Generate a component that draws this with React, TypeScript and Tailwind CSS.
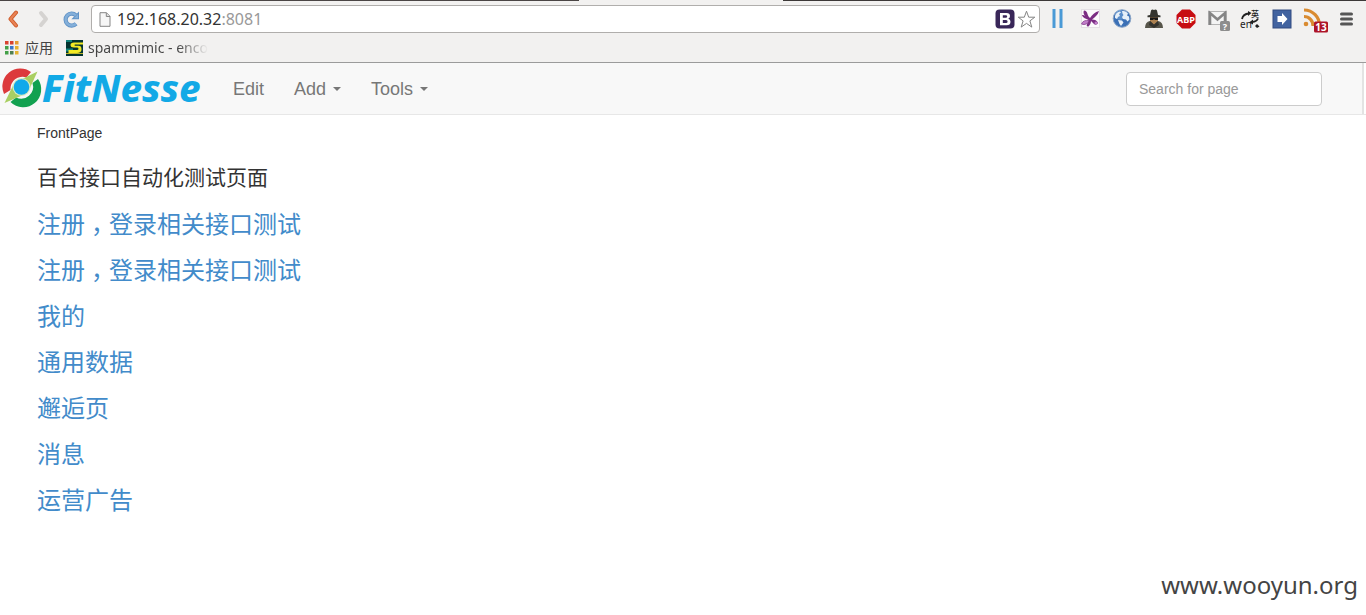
import type { ReactNode } from "react";

const links = [
  "注册，登录相关接口测试",
  "注册，登录相关接口测试",
  "我的",
  "通用数据",
  "邂逅页",
  "消息",
  "运营广告",
];

function BackIcon() {
  return (
    <svg width="12" height="18" viewBox="0 0 12 18" fill="none">
      <path d="M9 2.500 3.500 9 9 15.500" stroke="#cf5c2c" strokeWidth="4" strokeLinejoin="round" strokeLinecap="round" />
      <path d="M9 2.500 3.500 9 9 15.500" stroke="#e88355" strokeWidth="2" strokeLinejoin="round" strokeLinecap="round" />
    </svg>
  );
}

function ForwardIcon() {
  return (
    <svg width="12" height="18" viewBox="0 0 12 18" fill="none">
      <path d="m3 3 5 6-5 6" stroke="#d5d3d1" strokeWidth="4" strokeLinejoin="round" strokeLinecap="round" />
    </svg>
  );
}

function ReloadIcon() {
  return (
    <svg width="17" height="17" viewBox="0 0 17 17" fill="none">
      <path d="M13 12.700A6 6 0 1 1 12.800 4.300" stroke="#5f92c6" strokeWidth="4.200" />
      <path d="M16 .6v7.600H8.400z" fill="#5f92c6" />
      <path d="M13 12.700A6 6 0 1 1 12.800 4.300" stroke="#84afd9" strokeWidth="2.500" />
      <path d="M15 3v4.200h-4.200z" fill="#84afd9" />
    </svg>
  );
}

function PageIcon() {
  return (
    <svg width="12" height="15" viewBox="0 0 12 15">
      <path d="M1 .7h6.500L11 4.300v10H1z" fill="#f6f6f6" stroke="#858585" />
      <path d="M7.300.8v3.700H11" fill="#ddd" stroke="#858585" />
    </svg>
  );
}

function AppsIcon() {
  const colors = ["#d8422f", "#d8422f", "#e59a2e", "#43a047", "#3b77c9", "#e5b22e", "#43a047", "#4f7f4f", "#e5b22e"];
  return (
    <svg width="14" height="14" viewBox="0 0 14 14">
      {colors.map((c, i) => (
        <rect key={i} x={(i % 3) * 5} y={Math.floor(i / 3) * 5} width="3.500" height="3.500" fill={c} />
      ))}
    </svg>
  );
}

function SpamIcon() {
  return (
    <svg width="17" height="16" viewBox="0 0 17 16">
      <rect width="17" height="16" fill="#04332f" />
      <path d="M0 8.500h7v3H0zM0 0h6v2H0z" fill="#13827a" />
      <path d="M17 2.500H8Q4.500 2.500 4.500 5T8 7.500h3q1.500 0 1.500 1.200T11 10H2.500v3H11q4.500 0 4.500-3.800T12 5.800H9Q8.500 5.500 8.500 5T9 4.500h8z" fill="#f2ea23" />
      <path d="M0 13.500h17" stroke="#b9b42a" />
    </svg>
  );
}

function BootstrapIcon() {
  return (
    <svg width="20" height="20" viewBox="0 0 20 20">
      <rect x=".5" y=".5" width="19" height="19" rx="4" fill="#392759" />
      <path fillRule="evenodd" d="M5 4h6.500q3.500 0 3.500 3 0 2-1.700 2.700 2.200.6 2.200 3 0 3.500-4 3.500H5zm2.800 2.200v2.600h3q1.400 0 1.400-1.300t-1.400-1.300zm0 4.700v3h3.300q1.500 0 1.500-1.500t-1.500-1.500z" fill="#fff" />
    </svg>
  );
}

function StarIcon() {
  return (
    <svg width="19" height="19" viewBox="0 0 19 19">
      <path d="m9.500 1.200 2.200 6h6.100l-4.900 3.700 1.900 6.200-5.300-3.700-5.300 3.700 1.900-6.200L1.200 7.200h6.100z" fill="#fff" stroke="#858585" strokeLinejoin="round" />
    </svg>
  );
}

function BarsIcon() {
  return (
    <svg width="20" height="20" viewBox="0 0 20 20">
      <path d="M4.500 0h3v19h-3zM11.500 0h3v19h-3z" fill="#4a9ad6" />
    </svg>
  );
}

function BirdIcon() {
  return (
    <svg width="20" height="20" viewBox="0 0 20 20">
      <rect x="1.500" y=".5" width="18" height="18" fill="#fbfafb" stroke="#e4e0e4" />
      <path d="M4 1.500c2 0 3 1.500 3.500 3.500S9 8 10 9c2-3 5-6 9-7-1 4-4 6-7 8.500 3 0 5 1 6 3.500-1 2-3 2-4 1s-2-2-3-3c0 2-1 4-2.500 5.500-2 .5-2-1-1.500-2.500L8.500 11C6 9.500 3 9 2 6.500c1-1 2 0 3 .5C3.500 5 3 3 4 1.500z" fill="#7b2d83" />
      <path d="M1.500 15c1-3 4-4 7.500-3.500-1 3-4 5-7.500 3.500z" fill="#c07cc8" stroke="#8a4192" strokeWidth=".8" />
      <circle cx="16" cy="14" r="1.500" fill="#c07cc8" />
    </svg>
  );
}

function GlobeIcon() {
  return (
    <svg width="20" height="20" viewBox="0 0 20 20">
      <circle cx="10" cy="9.500" r="8.800" fill="#3b70b6" stroke="#8ba5c6" />
      <circle cx="8" cy="6" r="5" fill="#79a9dd" opacity=".5" />
      <path d="M3 7c1-3 3-4 5-4.500l1 1L7 5l1 2-2 1-1 2-2-1zM10 2c3-.5 5 1 6 2.500l-1 2 2 1 .5 3-2 2-1.500-2-3-.5-1-2 1.500-2-1-1.500zM6 11l4 .500 1.500 2L9 17l-1.500-2z" fill="#e6eff8" />
    </svg>
  );
}

function SpyIcon() {
  return (
    <svg width="20" height="20" viewBox="0 0 20 20">
      <path d="M1 19q0-6 5-7h8q5 1 5 7z" fill="#57554a" />
      <path d="M6 8h8v4l-4 4-4-4z" fill="#ac8150" />
      <path d="M6 6 7 1.500Q8 0 10 1q2-1 3 .5L14 6l2.500.5v1.800h-13V6.500z" fill="#35352f" />
      <path d="M6 8.500h8V11h-3l-1-1-1 1H6z" fill="#181818" />
      <path d="m6 12 4 3.500 4-3.500 1 4-5 3-5-3z" fill="#34332d" />
    </svg>
  );
}

function AdblockIcon() {
  return (
    <svg width="20" height="20" viewBox="0 0 20 20">
      <path d="M6 .5h8l5.500 5.500v8L14 19.500H6L.5 14V6z" fill="#c70d12" />
      <text x="10" y="13.500" textAnchor="middle" fontFamily="Open Sans, sans-serif" fontWeight="700" fontSize="9" fill="#fff">ABP</text>
    </svg>
  );
}

function MailIcon() {
  return (
    <svg width="24" height="24" viewBox="0 0 24 24">
      <rect x="2.500" y="4.500" width="18" height="13" fill="#f4f4f4" stroke="#b5b5b5" />
      <path d="M4 18V6l7.500 6.500L19 6v12" fill="none" stroke="#858585" strokeWidth="2.600" />
      <rect x="14" y="14" width="10" height="10" rx="1.500" fill="#8d8d8d" />
      <text x="19" y="22.500" textAnchor="middle" fontFamily="Noto Sans, sans-serif" fontWeight="700" fontSize="9" fill="#fff">?</text>
    </svg>
  );
}

function TranslateIcon() {
  return (
    <svg width="22" height="22" viewBox="0 0 22 22" overflow="visible">
      <text x="12" y="9" fontFamily="Noto Sans CJK SC, sans-serif" fontWeight="500" fontSize="8" fill="#222">英</text>
      <text x="1" y="20" fontFamily="Noto Sans, sans-serif" fontSize="10" fill="#222">en</text>
      <path d="M3 11Q4 6 10 5.500M19 10.500q-1 3-6 3.500" fill="none" stroke="#222" strokeWidth="1.800" />
      <path d="m9 3 3.500 2L9 8zM14 11.500v5l-4-2z" fill="#222" />
      <path d="m16 18 2-2 2.500 2.500L18 20z" fill="#222" />
    </svg>
  );
}

function ArrowIcon() {
  return (
    <svg width="20" height="20" viewBox="0 0 20 20">
      <rect x="1" y="1" width="18" height="18" fill="#4263a0" stroke="#304b80" />
      <path d="M5.500 7h4.500V4l5.500 6-5.500 6v-3H5.500z" fill="#fff" />
    </svg>
  );
}

function FeedIcon() {
  return (
    <svg width="26" height="26" viewBox="0 0 26 26" overflow="visible">
      <circle cx="5" cy="18" r="2.300" fill="#d98b31" />
      <path d="M3 10.500A9 9 0 0 1 12 20M3 4A15.500 15.500 0 0 1 18.500 20" fill="none" stroke="#d98b31" strokeWidth="3.200" />
      <rect x="13" y="15.500" width="14" height="11" rx="1.500" fill="#ad1428" />
      <text x="20" y="24.500" textAnchor="middle" fontFamily="Noto Sans, sans-serif" fontWeight="700" fontSize="10" fill="#fff">13</text>
    </svg>
  );
}

function MenuIcon() {
  return (
    <svg width="16" height="16" viewBox="0 0 16 16">
      <path d="M3.500 3h10M3.500 8h10M3.500 13h10" stroke="#555" strokeWidth="3" strokeLinecap="round" />
    </svg>
  );
}

const extensions: { name: string; icon: ReactNode }[] = [
  { name: "Pause", icon: <BarsIcon /> },
  { name: "Bird", icon: <BirdIcon /> },
  { name: "Globe", icon: <GlobeIcon /> },
  { name: "Spy", icon: <SpyIcon /> },
  { name: "Adblock", icon: <AdblockIcon /> },
  { name: "Mail", icon: <MailIcon /> },
  { name: "Translate", icon: <TranslateIcon /> },
  { name: "Send", icon: <ArrowIcon /> },
  { name: "Feeds", icon: <FeedIcon /> },
  { name: "Menu", icon: <MenuIcon /> },
];

function Logo() {
  return (
    <svg width="204" height="50" viewBox="0 0 204 50" overflow="visible" role="img" aria-label="FitNesse">
      <path d="M4 30A18 18 0 0 1 31 8L26.500 13.500A12 12 0 0 0 10.500 26z" fill="#dc3a3c" />
      <path d="M38 15A18 18 0 0 1 10.500 38l5.500-4.500A12 12 0 0 0 32.500 19z" fill="#12a150" />
      <path d="M37.500 7.500 29 26 22 31.500 4.500 39 13 21.500 20 16z" fill="#a9cf62" />
      <circle cx="21.500" cy="23" r="9" fill="#d9ecc4" />
      <circle cx="21.500" cy="23" r="7.800" fill="#12a9ea" />
      <text x="42" y="38" fontFamily="Noto Sans, sans-serif" fontWeight="800" fontStyle="italic" fontSize="38" fill="#12a9e6">FitNesse</text>
    </svg>
  );
}

function Caret() {
  return (
    <svg width="8" height="4" viewBox="0 0 8 4">
      <path d="M0 0h8L4 4z" fill="#777" />
    </svg>
  );
}

function Title({ text }: { text: string }) {
  const [head, tail] = text.split("，");
  return (
    <>
      {head}
      {tail && <span className="inline-block px-[6px] [font-feature-settings:'halt']">，</span>}
      {tail}
    </>
  );
}

export default function App() {
  return (
    <div className="flex min-h-screen flex-col bg-white font-['Liberation_Sans','Noto_Sans_CJK_SC',sans-serif] text-[#333]">
      <header className="border-b border-[#9b9b9b] bg-[#f2f1f0] font-['Noto_Sans','Noto_Sans_CJK_SC',sans-serif] text-[#444]">
        <div className="flex h-px">
          <div className="w-[579px] bg-[#4a4545]" />
          <div className="w-[204px]" />
          <div className="flex-1 bg-[#3c3838]" />
        </div>
        <div className="flex h-9 items-center">
          <div className="flex w-[91px] items-center pl-[7px]">
            <button aria-label="Back"><BackIcon /></button>
            <button aria-label="Forward" className="ml-[19px]"><ForwardIcon /></button>
            <button aria-label="Reload" className="ml-[13px]"><ReloadIcon /></button>
          </div>
          <div className="flex h-7 flex-1 items-center rounded-sm border border-[#b0aeac] bg-white pr-[3px] pl-[7px]">
            <PageIcon />
            <a href="#" className="ml-[6px] flex-1 text-base leading-6 text-[#333]">
              192.168.20.32<span className="text-[#999]">:8081</span>
            </a>
            <button aria-label="Bootstrap"><BootstrapIcon /></button>
            <button aria-label="Bookmark" className="ml-[2px]"><StarIcon /></button>
          </div>
          <div className="ml-[2px] flex pr-1">
            {extensions.map((e) => (
              <button key={e.name} aria-label={e.name} className="flex h-7 w-8 items-center justify-center">
                {e.icon}
              </button>
            ))}
          </div>
        </div>
        <nav className="flex h-[25px] items-start pl-[5px] text-sm leading-[22px]">
          <a href="#" className="flex items-center gap-[6px]"><AppsIcon />应用</a>
          <a href="#" className="ml-[13px] flex items-center gap-[5px]">
            <SpamIcon />
            <span className="bg-linear-to-r from-[#444] from-75% to-transparent bg-clip-text whitespace-nowrap text-transparent">spammimic - enco</span>
          </a>
        </nav>
      </header>

      <nav className="flex h-[52px] items-center border-b border-[#e7e7e7] bg-[#f8f8f8] text-lg text-[#777]">
        <a href="#"><Logo /></a>
        <a href="#" className="ml-[29px]">Edit</a>
        <button className="ml-[30px] flex items-center gap-[7px]">Add <Caret /></button>
        <button className="ml-[30px] flex items-center gap-[7px]">Tools <Caret /></button>
        <input
          type="search"
          aria-label="Search for page"
          placeholder="Search for page"
          className="mr-10 ml-auto h-[34px] w-[196px] rounded border border-[#ccc] bg-white px-3 text-sm placeholder:text-[#999]"
        />
        <div className="h-full w-1 border-l-2 border-[#e3e3e3] bg-white" />
      </nav>

      <main className="px-[37px] pt-2">
        <p className="text-sm leading-5">FrontPage</p>
        <h1 className="mt-[23px] text-[21px] leading-6">百合接口自动化测试页面</h1>
        <ul className="mt-[22px] flex flex-col gap-5 text-2xl leading-[26px] text-[#428bca]">
          {links.map((text, i) => (
            <li key={i} className="h-[26px]"><a href="#"><Title text={text} /></a></li>
          ))}
        </ul>
      </main>

      <footer className="mt-auto self-end pr-2 pb-3 font-['Noto_Sans',sans-serif] text-2xl leading-9 text-[#444]">
        www.wooyun.org
      </footer>
    </div>
  );
}
